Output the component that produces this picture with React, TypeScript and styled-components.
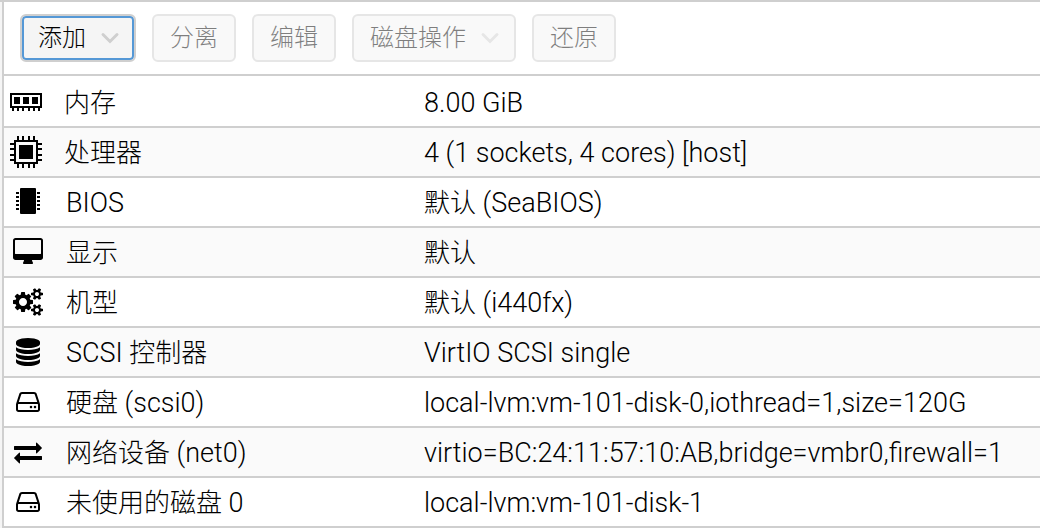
import React from "react";
import styled, { createGlobalStyle } from "styled-components";

const GlobalStyle = createGlobalStyle`
  body {
    margin: 0;
    background: #f5f5f5;
    color: #000;
    font-family: Roboto, "Noto Sans CJK SC", sans-serif;
    font-weight: 300;
  }
`;

const Panel = styled.main`
  margin-left: 2px;
  border-left: 2px solid #cfcfcf;
  background: #fff;
`;

const Page = styled.div`
  border-top: 2px solid #cfcfcf;
`;

const Toolbar = styled.div`
  display: flex;
  gap: 16px;
  padding: 12px 16px;
  border-bottom: 2px solid #cfcfcf;
`;

const ToolButton = styled.button`
  display: flex;
  align-items: center;
  gap: 16px;
  height: 48px;
  padding: 0 16px;
  border: 2px solid #cfcfcf;
  border-radius: 6px;
  background: #f5f5f5;
  color: #000;
  font-family: inherit;
  font-weight: 300;
  font-size: 24px;
  line-height: 32px;
  white-space: nowrap;

  &:disabled {
    opacity: 0.5;
  }

  &:enabled {
    box-shadow: inset 0 0 0 2px #5598d6;
  }
`;

const Arrow = styled.svg`
  display: block;
  width: 16px;
  height: 12px;
  overflow: visible;
  fill: none;
  stroke: #cfcfcf;
  stroke-width: 3;
  stroke-linecap: round;
`;

const HardwareTable = styled.table`
  width: 100%;
  padding-top: 2px;
  border-spacing: 0;
  table-layout: fixed;
  font-size: 27px;
  line-height: 32px;
`;

const NameColumn = styled.col`
  width: 408px;
`;

const Row = styled.tr`
  &:nth-child(even) {
    background: #fafafa;
  }
`;

const NameCell = styled.th`
  padding: 0 0 0 6px;
  border-bottom: 2px solid #cfcfcf;
  font-weight: 300;
  text-align: left;
`;

const ValueCell = styled.td`
  height: 46px;
  padding: 2px 0 0 12px;
  border-bottom: 2px solid #cfcfcf;
  white-space: nowrap;
`;

const Han = styled.span`
  font-size: 26px;
`;

const Label = styled.div`
  display: flex;
  align-items: center;
  gap: 20px;
  white-space: nowrap;
`;

const Name = styled.span`
  padding-top: 2px;
`;

const IconSlot = styled.span<{ $wide?: boolean }>`
  display: flex;
  justify-content: ${(p) => (p.$wide ? "flex-start" : "center")};
  width: ${(p) => (p.$wide ? 34 : 36)}px;

  svg {
    display: block;
  }
`;

/* Sets the Chinese runs a step smaller than the Latin ones around them. */
function MixedText({ text }: { text: string }) {
  return (
    <>
      {text
        .split(/([\u4e00-\u9fff]+)/)
        .filter(Boolean)
        .map((run, i) => (/[\u4e00-\u9fff]/.test(run) ? <Han key={i}>{run}</Han> : run))}
    </>
  );
}

function MenuArrow() {
  return (
    <Arrow viewBox="0 0 16 12" aria-hidden="true">
      <path d="M1 2.500 8 9.500l7-7" />
    </Arrow>
  );
}

function Glyph({ width, d }: { width: number; d: string }) {
  return (
    <svg width={width / 64} height={28} viewBox={`0 0 ${width} 1792`} aria-hidden="true">
      <path transform="translate(0 1536) scale(1 -1)" d={d} />
    </svg>
  );
}

function MemoryIcon() {
  return (
    <svg width={32} height={18} viewBox="0 0 32 18" shapeRendering="crispEdges" aria-hidden="true">
      <path
        fillRule="evenodd"
        d="M0 0h32v15H0zM2 2v11h28V2zM4 4h6v7H4zM13 4h6v7h-6zM22 4h6v7h-6zM2 15h2v3H2zM7 15h2v3H7zM12 15h2v3h-2zM18 15h2v3h-2zM23 15h2v3h-2zM28 15h2v3h-2z"
      />
    </svg>
  );
}

function CpuIcon() {
  return (
    <svg width={32} height={32} viewBox="0 0 32 32" shapeRendering="crispEdges" aria-hidden="true">
      <path fillRule="evenodd" d="M4 4h24v24H4zM6 6v20h20V6zM9 9h14v14H9z" />
      {[7, 12, 18, 23].map((p) => (
        <path key={p} d={`M${p} 0h2v4h-2zM${p} 28h2v4h-2zM0 ${p}h4v2H0zM28 ${p}h4v2h-4z`} />
      ))}
    </svg>
  );
}

function ChipIcon() {
  return (
    <svg width={24} height={28} viewBox="0 0 24 28" aria-hidden="true">
      <rect x={4} width={16} height={26} rx={1} />
      {[4, 8, 12, 16, 20].map((y) => (
        <path key={y} d={`M0 ${y}h3v2H0zM21 ${y}h3v2h-3z`} />
      ))}
    </svg>
  );
}

const desktop =
  "M1792 544v832q0 13 -9.5 22.5t-22.5 9.5h-1600q-13 0 -22.5 -9.5t-9.5 -22.5v-832q0 -13 9.5 -22.5t22.5 -9.5h1600q13 0 22.5 9.5t9.5 22.5zM1920 1376v-1088q0 -66 -47 -113t-113 -47h-544q0 -37 16 -77.5t32 -71t16 -43.5q0 -26 -19 -45t-45 -19h-512q-26 0 -45 19t-19 45q0 14 16 44t32 70t16 78h-544q-66 0 -113 47t-47 113v1088q0 66 47 113t113 47h1600q66 0 113 -47t47 -113z";

const smallGear =
  "v-140q0 -16 -149 -31q-12 -27 -30 -52q51 -113 51 -138q0 -4 -4 -7q-122 -71 -124 -71q-8 0 -46 47t-52 68q-20 -2 -30 -2t-30 2q-14 -21 -52 -68t-46 -47q-2 0 -124 71q-4 3 -4 7q0 25 51 138q-18 25 -30 52q-149 15 -149 31v140q0 16 149 31q13 29 30 52q-51 113 -51 138q0 4 4 7q4 2 35 20t59 34t30 16q8 0 46 -46.5t52 -67.5q20 2 30 2t30 -2q51 71 92 112l6 2q4 0 124 -70q4 -3 4 -7q0 -25 -51 -138q17 -23 30 -52q149 -15 149 -31z";

const gears =
  "M896 640q0 106 -75 181t-181 75t-181 -75t-75 -181t75 -181t181 -75t181 75t75 181zM1664 128q0 52 -38 90t-90 38t-90 -38t-38 -90q0 -53 37.5 -90.5t90.5 -37.5t90.5 37.5t37.5 90.5zM1664 1152q0 52 -38 90t-90 38t-90 -38t-38 -90q0 -53 37.5 -90.5t90.5 -37.5t90.5 37.5t37.5 90.5zM1280 731v-185q0 -10 -7 -19.5t-16 -10.5l-155 -24q-11 -35 -32 -76q34 -48 90 -115q7 -11 7 -20q0 -12 -7 -19q-23 -30 -82.5 -89.5t-78.5 -59.5q-11 0 -21 7l-115 90q-37 -19 -77 -31q-11 -108 -23 -155q-7 -24 -30 -24h-186q-11 0 -20 7.5t-10 17.5l-23 153q-34 10 -75 31l-118 -89q-7 -7 -20 -7q-11 0 -21 8q-144 133 -144 160q0 9 7 19q10 14 41 53t47 61q-23 44 -35 82l-152 24q-10 1 -17 9.5t-7 19.5v185q0 10 7 19.5t16 10.5l155 24q11 35 32 76q-34 48 -90 115q-7 11 -7 20q0 12 7 20q22 30 82 89t79 59q11 0 21 -7l115 -90q34 18 77 32q11 108 23 154q7 24 30 24h186q11 0 20 -7.5t10 -17.5l23 -153q34 -10 75 -31l118 89q8 7 20 7q11 0 21 -8q144 -133 144 -160q0 -8 -7 -19q-12 -16 -42 -54t-45 -60q23 -48 34 -82l152 -23q10 -2 17 -10.5t7 -19.5z" +
  "M1920 198" + smallGear + "M1920 1222" + smallGear;

const platter =
  "q237 0 443 43t325 127v-170q0 -69 -103 -128t-280 -93.5t-385 -34.5t-385 34.5t-280 93.5t-103 128v170q119 -84 325 -127t443 -43z";

const database =
  "M768 768" + platter + "M768 0" + platter + "M768 384" + platter +
  "M768 1536q208 0 385 -34.5t280 -93.5t103 -128v-128q0 -69 -103 -128t-280 -93.5t-385 -34.5t-385 34.5t-280 93.5t-103 128v128q0 69 103 128t280 93.5t385 34.5z";

const led = "q0 -33 -23.5 -56.5t-56.5 -23.5t-56.5 23.5t-23.5 56.5t23.5 56.5t56.5 23.5t56.5 -23.5t23.5 -56.5z";

const hardDisk =
  "M1040 320" + led + "M1296 320" + led +
  "M1408 160v320q0 13 -9.5 22.5t-22.5 9.5h-1216q-13 0 -22.5 -9.5t-9.5 -22.5v-320q0 -13 9.5 -22.5t22.5 -9.5h1216q13 0 22.5 9.5t9.5 22.5zM178 640h1180l-157 482q-4 13 -16 21.5t-26 8.5h-782q-14 0 -26 -8.5t-16 -21.5zM1536 480v-320q0 -66 -47 -113t-113 -47h-1216q-66 0 -113 47t-47 113v320q0 25 16 75l197 606q17 53 63 86t101 33h782q55 0 101 -33t63 -86l197 -606q16 -50 16 -75z";

const exchange =
  "M1792 352v-192q0 -13 -9.5 -22.5t-22.5 -9.5h-1376v-192q0 -13 -9.5 -22.5t-22.5 -9.5q-12 0 -24 10l-319 320q-9 9 -9 22q0 14 9 23l320 320q9 9 23 9q13 0 22.5 -9.5t9.5 -22.5v-192h1376q13 0 22.5 -9.5t9.5 -22.5zM1792 896q0 -14 -9 -23l-320 -320q-9 -9 -23 -9q-13 0 -22.5 9.5t-9.5 22.5v192h-1376q-13 0 -22.5 9.5t-9.5 22.5v192q0 13 9.5 22.5t22.5 9.5h1376v192q0 14 9 23t23 9q12 0 24 -10l319 -319q9 -9 9 -23z";

type Item = { name: string; value: string; icon: React.ReactNode; wide?: boolean };

const items: Item[] = [
  { name: "内存", value: "8.00 GiB", icon: <MemoryIcon />, wide: true },
  { name: "处理器", value: "4 (1 sockets, 4 cores) [host]", icon: <CpuIcon />, wide: true },
  { name: "BIOS", value: "默认 (SeaBIOS)", icon: <ChipIcon /> },
  { name: "显示", value: "默认", icon: <Glyph width={1920} d={desktop} /> },
  { name: "机型", value: "默认 (i440fx)", icon: <Glyph width={1920} d={gears} /> },
  { name: "SCSI 控制器", value: "VirtIO SCSI single", icon: <Glyph width={1536} d={database} /> },
  {
    name: "硬盘 (scsi0)",
    value: "local-lvm:vm-101-disk-0,iothread=1,size=120G",
    icon: <Glyph width={1536} d={hardDisk} />,
  },
  {
    name: "网络设备 (net0)",
    value: "virtio=BC:24:11:57:10:AB,bridge=vmbr0,firewall=1",
    icon: <Glyph width={1792} d={exchange} />,
  },
  { name: "未使用的磁盘 0", value: "local-lvm:vm-101-disk-1", icon: <Glyph width={1536} d={hardDisk} /> },
];

export default function App() {
  return (
    <Page>
      <GlobalStyle />
      <Panel>
        <Toolbar role="toolbar">
          <ToolButton type="button">
            添加
            <MenuArrow />
          </ToolButton>
          <ToolButton type="button" disabled>
            分离
          </ToolButton>
          <ToolButton type="button" disabled>
            编辑
          </ToolButton>
          <ToolButton type="button" disabled>
            磁盘操作
            <MenuArrow />
          </ToolButton>
          <ToolButton type="button" disabled>
            还原
          </ToolButton>
        </Toolbar>
        <HardwareTable>
          <colgroup>
            <NameColumn />
            <col />
          </colgroup>
          <tbody>
            {items.map((item) => (
              <Row key={item.name}>
                <NameCell scope="row">
                  <Label>
                    <IconSlot $wide={item.wide}>{item.icon}</IconSlot>
                    <Name>
                      <MixedText text={item.name} />
                    </Name>
                  </Label>
                </NameCell>
                <ValueCell>
                  <MixedText text={item.value} />
                </ValueCell>
              </Row>
            ))}
          </tbody>
        </HardwareTable>
      </Panel>
    </Page>
  );
}
